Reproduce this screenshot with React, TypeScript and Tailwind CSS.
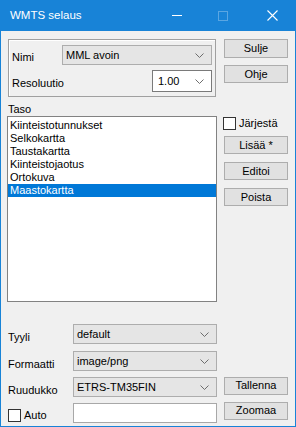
import type { ReactNode } from "react";

const LAYERS = [
  "Kiinteistotunnukset",
  "Selkokartta",
  "Taustakartta",
  "Kiinteistojaotus",
  "Ortokuva",
  "Maastokartta",
];

function Chevron() {
  return (
    <svg width="9" height="5" viewBox="0 0 9 5" className="shrink-0" aria-hidden="true">
      <path d="M0.5 0.5 L4.5 4.5 L8.5 0.5" fill="none" stroke="#6d6d6d" strokeWidth="1" />
    </svg>
  );
}

function Combo({ value, white, className }: { value: string; white?: boolean; className: string }) {
  return (
    <div
      className={
        white
          ? `flex items-center justify-between border border-[#7a7a7a] bg-white pl-[5px] pr-[7px] ${className}`
          : `flex items-center justify-between border border-[#adadad] bg-[#e5e5e5] pl-[3px] pr-[7px] ${className}`
      }
    >
      <span className="leading-none">{value}</span>
      <Chevron />
    </div>
  );
}

function Button({ children, className = "" }: { children: ReactNode; className?: string }) {
  return (
    <div
      className={`flex w-[64px] items-center justify-center border border-[#adadad] bg-[#e1e1e1] leading-none ${className}`}
    >
      {children}
    </div>
  );
}

function Check({ label }: { label: string }) {
  return (
    <div className="flex items-center gap-[3px]">
      <div className="h-[13px] w-[13px] border border-[#333] bg-white" />
      <span className="leading-none">{label}</span>
    </div>
  );
}

export default function App() {
  return (
    <div
      className="flex h-[427px] w-[296px] flex-col border border-t-0 border-[#1883d7] bg-[#f0f0f0] text-[11px] text-black"
      style={{ fontFamily: '"Liberation Sans", Arial, sans-serif' }}
    >
      {/* Title bar */}
      <div className="flex h-[31px] shrink-0 items-center bg-[#1883d7] text-white">
        <span className="ml-[9px] text-[11.5px]">WMTS selaus</span>
        <div className="ml-auto flex items-center">
          <div className="mr-[36px] h-px w-[10px] bg-white" />
          <div className="mr-[39px] h-[10px] w-[10px] border border-[#5aa6e2]" />
          <svg width="11" height="11" viewBox="0 0 11 11" className="mr-[17px]" aria-hidden="true">
            <path d="M0.5 0.5 L10.5 10.5 M10.5 0.5 L0.5 10.5" stroke="white" strokeWidth="1.1" />
          </svg>
        </div>
      </div>

      {/* Top section */}
      <div className="mt-[8px] flex pl-[7px]">
        <div className="flex h-[58px] w-[208px] flex-col border border-[#a0a0a0] pl-[3px] pr-[3px] pt-[5px] shadow-[inset_1px_1px_0_#fff]">
          <div className="flex h-[20px] items-center justify-between">
            <span className="mt-[5px]">Nimi</span>
            <Combo value="MML avoin" className="h-[20px] w-[150px]" />
          </div>
          <div className="mt-[5px] flex h-[22px] items-center justify-between">
            <span className="mt-[5px]">Resoluutio</span>
            <Combo value="1.00" white className="h-[22px] w-[60px]" />
          </div>
        </div>
        <div className="ml-[8px] flex flex-col">
          <Button className="h-[19px]">Sulje</Button>
          <Button className="mt-[7px] h-[18px]">Ohje</Button>
        </div>
      </div>

      {/* Taso */}
      <div className="mt-[6px] pl-[7px] leading-[13px]">Taso</div>
      <div className="flex pl-[6px]">
        <div className="flex h-[186px] w-[210px] flex-col border border-[#828282] bg-white pt-[2px]">
          {LAYERS.map((l, i) => (
            <div
              key={l}
              className={
                i === LAYERS.length - 1
                  ? "h-[13px] bg-[#0078d7] pl-[2px] leading-[13px] text-white"
                  : "h-[13px] pl-[2px] leading-[13px]"
              }
            >
              {l}
            </div>
          ))}
        </div>
        <div className="ml-[6px] flex flex-col pt-[1px]">
          <Check label="Järjestä" />
          <Button className="ml-px mt-[6px] h-[18px]">Lisää *</Button>
          <Button className="ml-px mt-[8px] h-[18px]">Editoi</Button>
          <Button className="ml-px mt-[8px] h-[18px]">Poista</Button>
        </div>
      </div>

      {/* Bottom section */}
      <div className="mt-[22px] flex flex-col pl-[7px]">
        <div className="flex h-[20px] items-center">
          <span className="mt-[6px] w-[65px]">Tyyli</span>
          <Combo value="default" className="h-[20px] w-[144px]" />
        </div>
        <div className="mt-[7px] flex h-[20px] items-center">
          <span className="mt-[6px] w-[65px]">Formaatti</span>
          <Combo value="image/png" className="h-[20px] w-[144px]" />
        </div>
        <div className="mt-[6px] flex h-[20px] items-center">
          <span className="mt-[6px] w-[65px]">Ruudukko</span>
          <Combo value="ETRS-TM35FIN" className="h-[20px] w-[144px]" />
          <Button className="mb-[3px] ml-[7px] h-[18px]">Tallenna</Button>
        </div>
        <div className="mt-[6px] flex h-[20px] items-center">
          <div className="mt-[4px] w-[65px]">
            <Check label="Auto" />
          </div>
          <div className="h-[20px] w-[144px] border border-[#a8a8a8] bg-white" />
          <Button className="mb-[5px] ml-[7px] h-[18px]">Zoomaa</Button>
        </div>
      </div>
    </div>
  );
}
